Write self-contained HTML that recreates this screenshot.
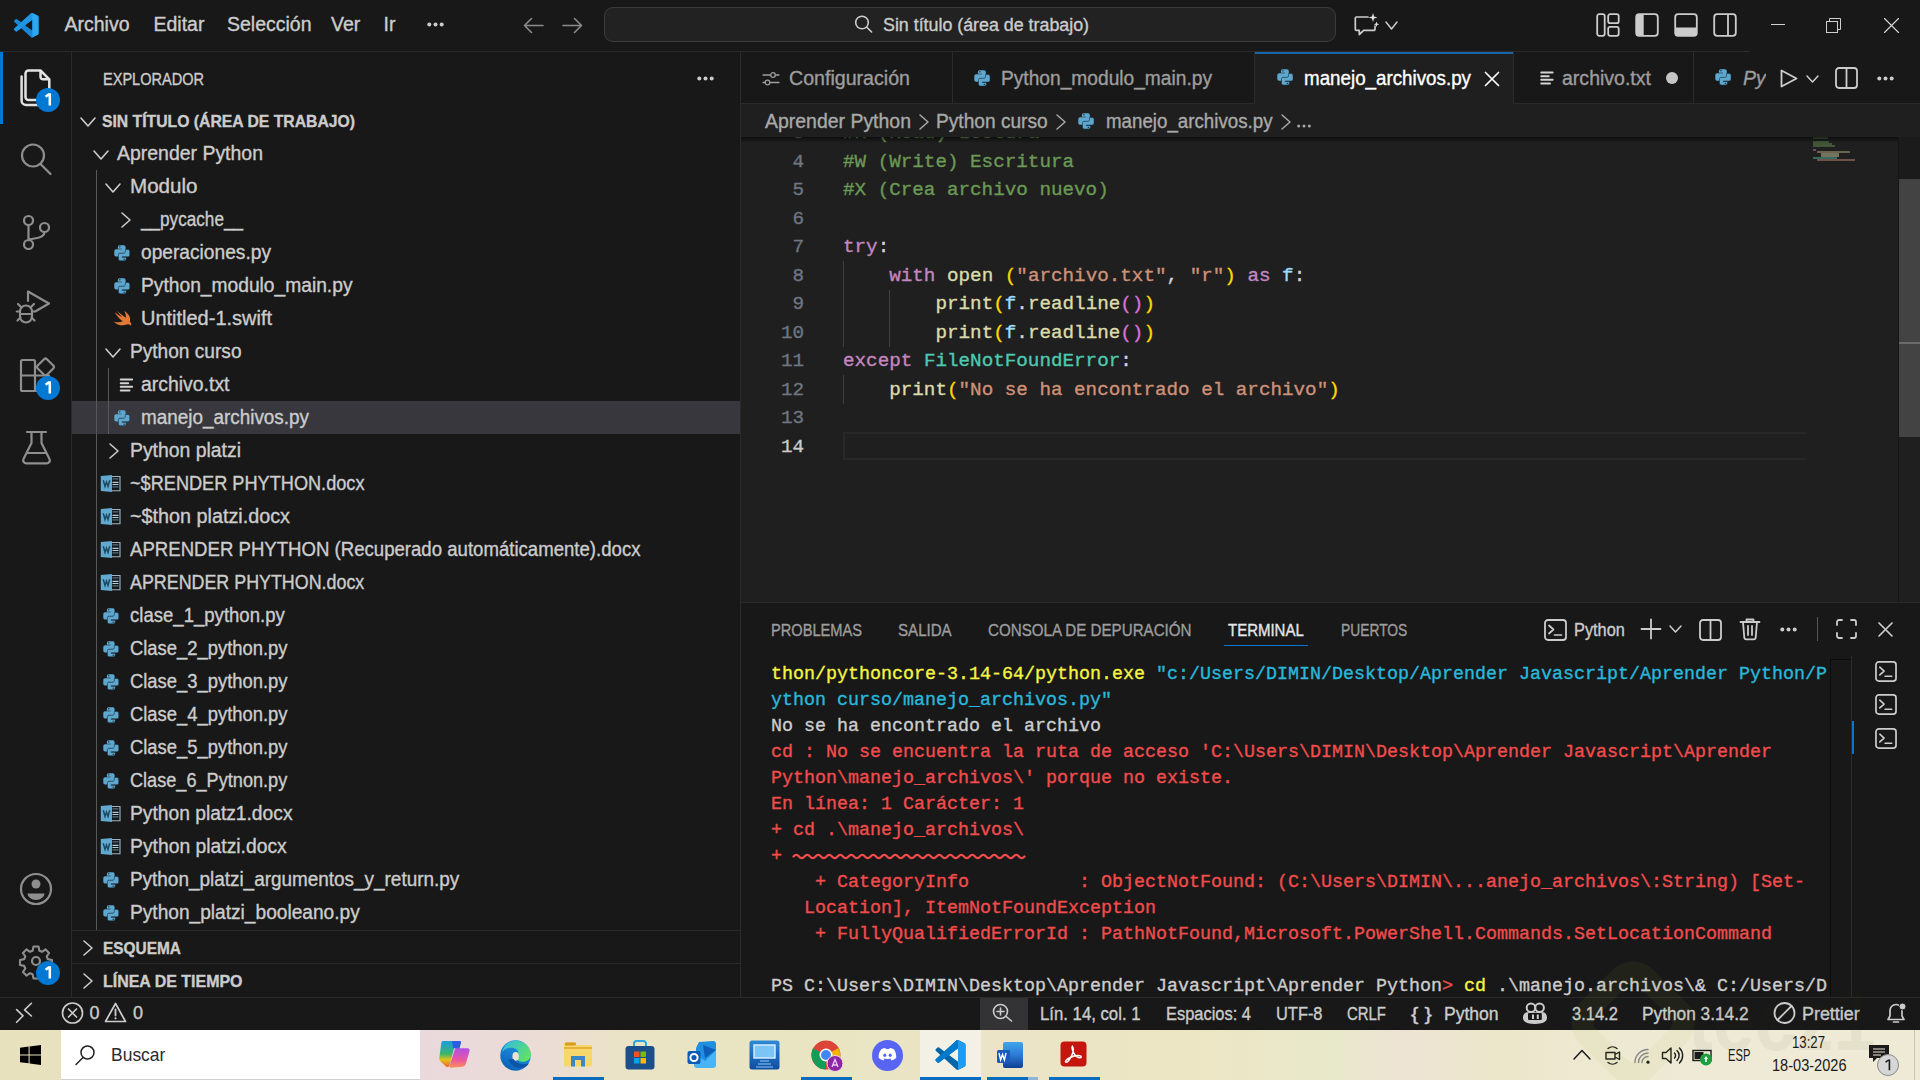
<!DOCTYPE html>
<html><head><meta charset="utf-8"><style>
html,body{margin:0;padding:0;width:1920px;height:1080px;overflow:hidden;background:#181818;}
.t{position:absolute;white-space:pre;font-family:"Liberation Sans",sans-serif;line-height:1;transform-origin:0 0;-webkit-text-stroke-width:0.35px;}
.r{position:absolute;}
.i{position:absolute;overflow:visible;}
</style></head><body>
<div class="r" style="left:0px;top:0px;width:1920px;height:1080px;background:#181818;"></div>
<div class="r" style="left:0px;top:51px;width:1750px;height:1px;background:#2b2b2b;"></div>
<div class="r" style="left:71px;top:52px;width:1px;height:945px;background:#2b2b2b;"></div>
<div class="r" style="left:740px;top:52px;width:1px;height:945px;background:#2b2b2b;"></div>
<div class="r" style="left:741px;top:103px;width:1179px;height:500px;background:#1f1f1f;"></div>
<div class="r" style="left:741px;top:103px;width:1179px;height:1px;background:#2b2b2b;"></div>
<div class="r" style="left:741px;top:602px;width:1179px;height:1px;background:#2b2b2b;"></div>
<div class="r" style="left:741px;top:603px;width:1179px;height:394px;background:#181818;"></div>
<div class="r" style="left:0px;top:997px;width:1920px;height:1px;background:#2b2b2b;"></div>
<div class="r" style="left:0px;top:998px;width:1920px;height:32px;background:#181818;"></div>
<svg class="i" style="left:14px;top:12.5px;width:24.5px;height:24.5px;" viewBox="0 0 100 100"><path fill="#1a86d6" d="M96.5 10.8L75.9.9a6.2 6.2 0 0 0-7.1 1.2L29.4 38 12.2 25a4.2 4.2 0 0 0-5.3.2L1.4 30.2a4.2 4.2 0 0 0 0 6.2L16.3 50 1.4 63.6a4.2 4.2 0 0 0 0 6.2l5.5 5a4.2 4.2 0 0 0 5.3.2l17.2-13 39.4 35.9a6.2 6.2 0 0 0 7.1 1.2l20.6-9.9a6.2 6.2 0 0 0 3.5-5.6V16.4a6.2 6.2 0 0 0-3.5-5.6zM75 72.7L45.1 50 75 27.3z"></path><path fill="#1f95e4" d="M96.5 10.8L75.9.9a6.2 6.2 0 0 0-7.1 1.2L1.4 63.6a4.2 4.2 0 0 0 0 6.2l5.5 5a4.2 4.2 0 0 0 5.3.2L93.4 13.2a4.2 4.2 0 0 1 6.6 3.2v-.2a6.2 6.2 0 0 0-3.5-5.4z"></path><path fill="#2aa8f2" d="M75.9 99.1a6.2 6.2 0 0 1-7.1-1.2c2.3 2.3 6.2.7 6.2-2.6V4.7c0-3.3-3.9-4.9-6.2-2.6a6.2 6.2 0 0 1 7.1-1.2l20.6 9.9a6.2 6.2 0 0 1 3.5 5.6v67.2a6.2 6.2 0 0 1-3.5 5.6z"></path></svg>
<div class="t" style="left:64.5px;top:15.49px;font-size:19.5px;color:#cccccc;">Archivo</div>
<div class="t" style="left:153.5px;top:15.49px;font-size:19.5px;color:#cccccc;">Editar</div>
<div class="t" style="left:227px;top:15.49px;font-size:19.5px;color:#cccccc;">Selección</div>
<div class="t" style="left:331px;top:15.49px;font-size:19.5px;color:#cccccc;">Ver</div>
<div class="t" style="left:383.5px;top:15.49px;font-size:19.5px;color:#cccccc;">Ir</div>
<svg class="i" style="left:427px;top:22px;width:17px;height:5px;" viewBox="0 0 17 5"><circle cx="2.3" cy="2.5" r="2" fill="#cccccc"></circle><circle cx="8.5" cy="2.5" r="2" fill="#cccccc"></circle><circle cx="14.7" cy="2.5" r="2" fill="#cccccc"></circle></svg>
<svg class="i" style="left:523px;top:17px;width:21px;height:17px;" viewBox="0 0 21 17"><path d="M20 8.5H1.5M8.5 1.5L1.5 8.5l7 7" fill="none" stroke="#8a8a8a" stroke-width="1.6" stroke-linecap="round" stroke-linejoin="round"></path></svg>
<svg class="i" style="left:562px;top:17px;width:21px;height:17px;" viewBox="0 0 21 17"><path d="M1 8.5h18.5M12.5 1.5l7 7-7 7" fill="none" stroke="#8a8a8a" stroke-width="1.6" stroke-linecap="round" stroke-linejoin="round"></path></svg>
<div class="r" style="left:604px;top:7px;width:730px;height:33px;border:1px solid #3c3c3c;border-radius:9px;background:#222222;"></div>
<svg class="i" style="left:854px;top:15px;width:19px;height:18px;" viewBox="0 0 19 18"><path d="M8 1.2a6.3 6.3 0 1 1 0 12.6A6.3 6.3 0 0 1 8 1.2zM12.6 12l5 5" fill="none" stroke="#cccccc" stroke-width="1.6" stroke-linecap="round" stroke-linejoin="round"></path></svg>
<div class="t" style="left: 883px; top: 15.76px; font-size: 18px; color: rgb(204, 204, 204); transform: scaleX(0.9898);">Sin título (área de trabajo)</div>
<svg class="i" style="left:1354px;top:12px;width:26px;height:25px;" viewBox="0 0 26 25"><path d="M14 5H2.5a1.2 1.2 0 0 0-1.2 1.2v11a1.2 1.2 0 0 0 1.2 1.2h2.8v4.2l4.3-4.2h10.2a1.2 1.2 0 0 0 1.2-1.2v-3" fill="none" stroke="#cccccc" stroke-width="1.7" stroke-linecap="round" stroke-linejoin="round"></path><path d="M19 1l1.1 3.4 3.4 1.1-3.4 1.1L19 10l-1.1-3.4-3.4-1.1 3.4-1.1z" fill="#e0e0e0"></path><path d="M22.5 9.5l.7 2 2 .7-2 .7-.7 2-.7-2-2-.7 2-.7z" fill="#e0e0e0"></path></svg>
<svg class="i" style="left:1385px;top:21px;width:13px;height:9px;" viewBox="0 0 13 9"><path d="M1 1L6.5 8L12 1" fill="none" stroke="#cccccc" stroke-width="1.5" stroke-linecap="round" stroke-linejoin="round"></path></svg>
<svg class="i" style="left:1596px;top:13px;width:24px;height:24px;" viewBox="0 0 24 24"><rect x="1.2" y="1.2" width="7.5" height="21.6" rx="2" fill="none" stroke="#cccccc" stroke-width="1.8"></rect><rect x="12.2" y="1.2" width="10.5" height="9" rx="2" fill="none" stroke="#cccccc" stroke-width="1.8"></rect><rect x="12.2" y="13.8" width="10.5" height="9" rx="2" fill="none" stroke="#cccccc" stroke-width="1.8"></rect></svg>
<svg class="i" style="left:1635px;top:13px;width:24px;height:24px;" viewBox="0 0 24 24"><path d="M3.2 1.2h5.5v21.6H3.2a2 2 0 0 1-2-2V3.2a2 2 0 0 1 2-2z" fill="#cccccc"></path><rect x="1.2" y="1.2" width="21.6" height="21.6" rx="3" fill="none" stroke="#cccccc" stroke-width="1.8"></rect></svg>
<svg class="i" style="left:1674px;top:13px;width:24px;height:24px;" viewBox="0 0 24 24"><path d="M1.2 14.5h21.6v5.3a3 3 0 0 1-3 3H4.2a3 3 0 0 1-3-3z" fill="#cccccc"></path><rect x="1.2" y="1.2" width="21.6" height="21.6" rx="3" fill="none" stroke="#cccccc" stroke-width="1.8"></rect></svg>
<svg class="i" style="left:1713px;top:13px;width:24px;height:24px;" viewBox="0 0 24 24"><rect x="1.2" y="1.2" width="21.6" height="21.6" rx="3" fill="none" stroke="#cccccc" stroke-width="1.8"></rect><path d="M15 1.2v21.6" stroke="#cccccc" stroke-width="1.8"></path></svg>
<div class="r" style="left:1771px;top:24px;width:14px;height:1px;background:#d0d0d0;"></div>
<svg class="i" style="left:1826px;top:18px;width:15px;height:15px;" viewBox="0 0 15 15"><rect x="0.5" y="3.5" width="11" height="11" fill="none" stroke="#d0d0d0" stroke-width="1"></rect><path d="M3.5 3.5V.5h11v11h-3" fill="none" stroke="#d0d0d0" stroke-width="1"></path></svg>
<svg class="i" style="left:1884px;top:18px;width:15px;height:15px;" viewBox="0 0 15 15"><path d="M.5.5l14 14M14.5.5l-14 14" fill="none" stroke="#d8d8d8" stroke-width="1.1" stroke-linecap="round" stroke-linejoin="round"></path></svg>
<div class="r" style="left:0px;top:52px;width:3px;height:72px;background:#0078d4;"></div>
<svg class="i" style="left:19px;top:69px;width:32px;height:38px;" viewBox="0 0 32 38"><path d="M9.5 1.5h12l8.8 8.8V28a3 3 0 0 1-3 3H9.5a3 3 0 0 1-3-3V4.5a3 3 0 0 1 3-3zM21.5 1.5v6.3a2.5 2.5 0 0 0 2.5 2.5h6.3" fill="none" stroke="#e2e2e2" stroke-width="2.5" stroke-linecap="round" stroke-linejoin="round"></path><path d="M2.6 7.5v24a4.5 4.5 0 0 0 4.5 4.5h14" fill="none" stroke="#e2e2e2" stroke-width="2.5" stroke-linecap="round" stroke-linejoin="round"></path></svg>
<div class="r" style="left:36px;top:88px;width:24px;height:24px;border-radius:12px;background:#0078d4;"></div>
<svg class="i" style="left:36px;top:88px;width:24px;height:24px;" viewBox="0 0 24 24"><path d="M9.6 8.8L12.6 6.5H13.8V17.6" fill="none" stroke="#ffffff" stroke-width="2.5" stroke-linejoin="miter"></path></svg>
<svg class="i" style="left:19px;top:142px;width:34px;height:34px;" viewBox="0 0 34 34"><path d="M14 2.5a11 11 0 1 1 0 22 11 11 0 0 1 0-22zM22 22.5l9.5 9.5" fill="none" stroke="#8e8e8e" stroke-width="2.2" stroke-linecap="round" stroke-linejoin="round"></path></svg>
<svg class="i" style="left:19.5px;top:213px;width:32px;height:38px;" viewBox="0 0 32 38"><path d="M8.5 3a4.5 4.5 0 1 1 0 9 4.5 4.5 0 0 1 0-9zM8.5 27a4.5 4.5 0 1 1 0 9 4.5 4.5 0 0 1 0-9zM24.5 10a4.5 4.5 0 1 1 0 9 4.5 4.5 0 0 1 0-9zM8.5 12v15M24.5 19c0 5-6 6-10 6.5-3 .4-6 1.5-6 1.5" fill="none" stroke="#8e8e8e" stroke-width="2.2" stroke-linecap="round" stroke-linejoin="round"></path></svg>
<svg class="i" style="left:16px;top:288px;width:36px;height:36px;" viewBox="0 0 36 36"><path d="M12 13V3.5l21 12-13 7.5" fill="none" stroke="#8e8e8e" stroke-width="2.2" stroke-linecap="round" stroke-linejoin="round"></path><path d="M10 17.5a6 6 0 0 1 6 6v5a6 6 0 0 1-12 0v-5a6 6 0 0 1 6-6zM4 23.5H.8M19.2 23.5H16M4.5 29.5l-3 3M15.5 29.5l3 3M4.5 18.5l-2.5-2.5M15.5 18.5l2.5-2.5M4 26h12" fill="none" stroke="#8e8e8e" stroke-width="2.2" stroke-linecap="round" stroke-linejoin="round"></path></svg>
<svg class="i" style="left:19px;top:356px;width:37px;height:37px;" viewBox="0 0 37 37"><path d="M3.5 4h11a1.5 1.5 0 0 1 1.5 1.5V19.5H2V5.5A1.5 1.5 0 0 1 3.5 4zM2 19.5h14V35H3.5A1.5 1.5 0 0 1 2 33.5zM16 19.5h14V35H16z" fill="none" stroke="#8e8e8e" stroke-width="2.2" stroke-linejoin="round"></path><rect x="20" y="4.5" width="13" height="13" rx="2" transform="rotate(45 26.5 11)" fill="none" stroke="#8e8e8e" stroke-width="2.2"></rect></svg>
<div class="r" style="left:36px;top:376px;width:24px;height:24px;border-radius:12px;background:#0078d4;"></div>
<svg class="i" style="left:36px;top:376px;width:24px;height:24px;" viewBox="0 0 24 24"><path d="M9.6 8.8L12.6 6.5H13.8V17.6" fill="none" stroke="#ffffff" stroke-width="2.5" stroke-linejoin="miter"></path></svg>
<svg class="i" style="left:21px;top:430px;width:31px;height:35px;" viewBox="0 0 31 35"><path d="M6 2h19M10.5 2v11L2.5 29a3 3 0 0 0 2.7 4.3h20.6A3 3 0 0 0 28.5 29L20.5 13V2M6.5 23h18" fill="none" stroke="#8e8e8e" stroke-width="2.2" stroke-linecap="round" stroke-linejoin="round"></path></svg>
<svg class="i" style="left:19px;top:872px;width:34px;height:34px;" viewBox="0 0 34 34"><circle cx="17" cy="17" r="15" fill="none" stroke="#8e8e8e" stroke-width="2.2"></circle><circle cx="17" cy="12" r="4.5" fill="#8e8e8e"></circle><path d="M8.5 21.5h17a8.5 6.5 0 0 1-17 0z" fill="#8e8e8e"></path></svg>
<svg class="i" style="left:19px;top:944px;width:34px;height:34px;" viewBox="0 0 34 34"><path d="M14.5 2.5h5l.9 4.2 2.6 1.1 3.6-2.4 3.5 3.5-2.4 3.6 1.1 2.6 4.2.9v5l-4.2.9-1.1 2.6 2.4 3.6-3.5 3.5-3.6-2.4-2.6 1.1-.9 4.2h-5l-.9-4.2-2.6-1.1-3.6 2.4-3.5-3.5 2.4-3.6-1.1-2.6-4.2-.9v-5l4.2-.9 1.1-2.6-2.4-3.6 3.5-3.5 3.6 2.4 2.6-1.1z" fill="none" stroke="#8e8e8e" stroke-width="2.1" stroke-linecap="round" stroke-linejoin="round"></path><circle cx="17" cy="17" r="4" fill="none" stroke="#8e8e8e" stroke-width="2.2"></circle></svg>
<div class="r" style="left:36px;top:961px;width:24px;height:24px;border-radius:12px;background:#0078d4;"></div>
<svg class="i" style="left:36px;top:961px;width:24px;height:24px;" viewBox="0 0 24 24"><path d="M9.6 8.8L12.6 6.5H13.8V17.6" fill="none" stroke="#ffffff" stroke-width="2.5" stroke-linejoin="miter"></path></svg>
<div class="t" style="left: 102.5px; top: 71.03px; font-size: 16.5px; color: rgb(204, 204, 204); transform: scaleX(0.8811);">EXPLORADOR</div>
<svg class="i" style="left:697px;top:75.5px;width:17px;height:5px;" viewBox="0 0 17 5"><circle cx="2.3" cy="2.5" r="2" fill="#cccccc"></circle><circle cx="8.5" cy="2.5" r="2" fill="#cccccc"></circle><circle cx="14.7" cy="2.5" r="2" fill="#cccccc"></circle></svg>
<svg class="i" style="left:79.5px;top:116.5px;width:16px;height:10px;" viewBox="0 0 16 10"><path d="M1 1L8.0 9L15 1" fill="none" stroke="#cccccc" stroke-width="1.6" stroke-linecap="round" stroke-linejoin="round"></path></svg>
<div class="t" style="left: 102px; top: 113.03px; font-size: 16.5px; color: rgb(204, 204, 204); font-weight: 700; transform: scaleX(0.9539);">SIN TÍTULO (ÁREA DE TRABAJO)</div>
<div class="r" style="left:72px;top:401px;width:668px;height:33px;background:#37373d;"></div>
<div class="r" style="left:96px;top:170px;width:1px;height:760px;background:#585858;"></div>
<div class="r" style="left:108px;top:368px;width:1px;height:66px;background:#585858;"></div>
<svg class="i" style="left:92.5px;top:149.5px;width:16px;height:10px;" viewBox="0 0 16 10"><path d="M1 1L8.0 9L15 1" fill="none" stroke="#cccccc" stroke-width="1.6" stroke-linecap="round" stroke-linejoin="round"></path></svg>
<div class="t" style="left: 117px; top: 144.49px; font-size: 19.5px; color: rgb(204, 204, 204); transform: scaleX(0.9975);">Aprender Python</div>
<svg class="i" style="left:105px;top:182.5px;width:16px;height:10px;" viewBox="0 0 16 10"><path d="M1 1L8.0 9L15 1" fill="none" stroke="#cccccc" stroke-width="1.6" stroke-linecap="round" stroke-linejoin="round"></path></svg>
<div class="t" style="left: 129.5px; top: 177.49px; font-size: 19.5px; color: rgb(204, 204, 204); transform: scaleX(1.0552);">Modulo</div>
<svg class="i" style="left:121px;top:211.5px;width:10px;height:16px;" viewBox="0 0 10 16"><path d="M1 1L9 8.0L1 15" fill="none" stroke="#cccccc" stroke-width="1.6" stroke-linecap="round" stroke-linejoin="round"></path></svg>
<div class="t" style="left: 141px; top: 210.49px; font-size: 19.5px; color: rgb(204, 204, 204); transform: scaleX(0.8792);">__pycache__</div>
<svg class="i" style="left:114.4px;top:244.5px;width:16px;height:16px;" viewBox="0 0 16.3 16.3"><path fill="#5ea8cf" d="M3.9 2Q3.9 .3 5.6 .3H10Q11.8 .3 11.8 2V6.8Q11.8 8.2 10.3 8.2H6.3Q4.8 8.2 4.8 9.7V11.7H2Q.3 11.7 .3 10V6Q.3 4.3 2 4.3H8V3.7H3.9Z"></path><circle cx="5.9" cy="1.8" r=".75" fill="#1e3a4c"></circle><path fill="#5ea8cf" stroke="#1d3140" stroke-width=".55" d="M12.4 14.3Q12.4 16 10.7 16H6.3Q4.5 16 4.5 14.3V9.8Q4.5 8.3 6 8.3H10Q11.5 8.3 11.5 6.8V4.6H14.3Q16 4.6 16 6.3V10.3Q16 12 14.3 12H8.3V12.6H12.4Z"></path><circle cx="10.4" cy="14.5" r=".75" fill="#1e3a4c"></circle></svg>
<div class="t" style="left: 141px; top: 243.49px; font-size: 19.5px; color: rgb(204, 204, 204); transform: scaleX(0.9829);">operaciones.py</div>
<svg class="i" style="left:114.4px;top:277.5px;width:16px;height:16px;" viewBox="0 0 16.3 16.3"><path fill="#5ea8cf" d="M3.9 2Q3.9 .3 5.6 .3H10Q11.8 .3 11.8 2V6.8Q11.8 8.2 10.3 8.2H6.3Q4.8 8.2 4.8 9.7V11.7H2Q.3 11.7 .3 10V6Q.3 4.3 2 4.3H8V3.7H3.9Z"></path><circle cx="5.9" cy="1.8" r=".75" fill="#1e3a4c"></circle><path fill="#5ea8cf" stroke="#1d3140" stroke-width=".55" d="M12.4 14.3Q12.4 16 10.7 16H6.3Q4.5 16 4.5 14.3V9.8Q4.5 8.3 6 8.3H10Q11.5 8.3 11.5 6.8V4.6H14.3Q16 4.6 16 6.3V10.3Q16 12 14.3 12H8.3V12.6H12.4Z"></path><circle cx="10.4" cy="14.5" r=".75" fill="#1e3a4c"></circle></svg>
<div class="t" style="left: 141px; top: 276.49px; font-size: 19.5px; color: rgb(204, 204, 204); transform: scaleX(0.9854);">Python_modulo_main.py</div>
<svg class="i" style="left:111.5px;top:308.5px;width:21px;height:19px;preserveAspectRatio:none" viewBox="0 0 16 15"><path d="M13.8 9.6c.1-.3.2-.6.2-1C14.3 5.6 12 3 9.3 1.5c1.2 1.7 1.7 3.7 1.2 5.4C8.7 5.6 5.8 3.4 3.5 1.4c1.4 2 3 3.8 4.3 5C6 5.5 3.6 3.8 1.8 2.5c1.6 2.7 3.9 5.4 6.4 7.2-2 1-4.8 1.1-7.2.1 2 2 4.9 3.2 7.5 3.1 1.6 0 2.8-.8 3.9-.8 1 0 1.8.7 2.4 1.2.4-1.3-.2-2.8-1-3.7z" fill="#e37933"></path></svg>
<div class="t" style="left: 141px; top: 309.49px; font-size: 19.5px; color: rgb(204, 204, 204); transform: scaleX(1.0244);">Untitled-1.swift</div>
<svg class="i" style="left:105px;top:347.5px;width:16px;height:10px;" viewBox="0 0 16 10"><path d="M1 1L8.0 9L15 1" fill="none" stroke="#cccccc" stroke-width="1.6" stroke-linecap="round" stroke-linejoin="round"></path></svg>
<div class="t" style="left: 129.5px; top: 342.49px; font-size: 19.5px; color: rgb(204, 204, 204); transform: scaleX(0.9797);">Python curso</div>
<svg class="i" style="left:118.5px;top:378px;width:14px;height:14px;preserveAspectRatio:none" viewBox="0 0 14 16"><path d="M1 1.8h13M1 6h8.5M1 10h13M1 14.2h10" fill="none" stroke="#d4d4d4" stroke-width="2.3" stroke-linecap="round" stroke-linejoin="round"></path></svg>
<div class="t" style="left: 141px; top: 375.49px; font-size: 19.5px; color: rgb(204, 204, 204); transform: scaleX(0.9958);">archivo.txt</div>
<svg class="i" style="left:114.4px;top:409.5px;width:16px;height:16px;" viewBox="0 0 16.3 16.3"><path fill="#5ea8cf" d="M3.9 2Q3.9 .3 5.6 .3H10Q11.8 .3 11.8 2V6.8Q11.8 8.2 10.3 8.2H6.3Q4.8 8.2 4.8 9.7V11.7H2Q.3 11.7 .3 10V6Q.3 4.3 2 4.3H8V3.7H3.9Z"></path><circle cx="5.9" cy="1.8" r=".75" fill="#1e3a4c"></circle><path fill="#5ea8cf" stroke="#1d3140" stroke-width=".55" d="M12.4 14.3Q12.4 16 10.7 16H6.3Q4.5 16 4.5 14.3V9.8Q4.5 8.3 6 8.3H10Q11.5 8.3 11.5 6.8V4.6H14.3Q16 4.6 16 6.3V10.3Q16 12 14.3 12H8.3V12.6H12.4Z"></path><circle cx="10.4" cy="14.5" r=".75" fill="#1e3a4c"></circle></svg>
<div class="t" style="left: 141px; top: 408.49px; font-size: 19.5px; color: rgb(204, 204, 204); transform: scaleX(0.9686);">manejo_archivos.py</div>
<svg class="i" style="left:108.5px;top:442.5px;width:10px;height:16px;" viewBox="0 0 10 16"><path d="M1 1L9 8.0L1 15" fill="none" stroke="#cccccc" stroke-width="1.6" stroke-linecap="round" stroke-linejoin="round"></path></svg>
<div class="t" style="left: 129.5px; top: 441.49px; font-size: 19.5px; color: rgb(204, 204, 204); transform: scaleX(0.9941);">Python platzi</div>
<svg class="i" style="left:96px;top:470px;width:30px;height:26px;" viewBox="0 0 30 26"><path d="M16 6.5h8v14.2h-8" fill="none" stroke="#9ab5c5" stroke-width="1.1"></path><path d="M16.5 12.4h6M16.5 14.5h6" stroke="#b0cfe0" stroke-width="1.2"></path><path d="M16.5 8.9h6M16.5 16.9h6" stroke="#5f8ba3" stroke-width="1"></path><path d="M4.8 6L16 5v17L4.8 21z" fill="#62a9d0"></path><path d="M7.3 10.3l1.7 6.2 1.5-4.4 1.5 4.4 1.7-6.2" fill="none" stroke="#1d4963" stroke-width="1.5"></path></svg>
<div class="t" style="left: 130px; top: 474.49px; font-size: 19.5px; color: rgb(204, 204, 204); transform: scaleX(0.9307);">~$RENDER PHYTHON.docx</div>
<svg class="i" style="left:96px;top:503px;width:30px;height:26px;" viewBox="0 0 30 26"><path d="M16 6.5h8v14.2h-8" fill="none" stroke="#9ab5c5" stroke-width="1.1"></path><path d="M16.5 12.4h6M16.5 14.5h6" stroke="#b0cfe0" stroke-width="1.2"></path><path d="M16.5 8.9h6M16.5 16.9h6" stroke="#5f8ba3" stroke-width="1"></path><path d="M4.8 6L16 5v17L4.8 21z" fill="#62a9d0"></path><path d="M7.3 10.3l1.7 6.2 1.5-4.4 1.5 4.4 1.7-6.2" fill="none" stroke="#1d4963" stroke-width="1.5"></path></svg>
<div class="t" style="left: 130px; top: 507.49px; font-size: 19.5px; color: rgb(204, 204, 204); transform: scaleX(1.0144);">~$thon platzi.docx</div>
<svg class="i" style="left:96px;top:536px;width:30px;height:26px;" viewBox="0 0 30 26"><path d="M16 6.5h8v14.2h-8" fill="none" stroke="#9ab5c5" stroke-width="1.1"></path><path d="M16.5 12.4h6M16.5 14.5h6" stroke="#b0cfe0" stroke-width="1.2"></path><path d="M16.5 8.9h6M16.5 16.9h6" stroke="#5f8ba3" stroke-width="1"></path><path d="M4.8 6L16 5v17L4.8 21z" fill="#62a9d0"></path><path d="M7.3 10.3l1.7 6.2 1.5-4.4 1.5 4.4 1.7-6.2" fill="none" stroke="#1d4963" stroke-width="1.5"></path></svg>
<div class="t" style="left: 129.5px; top: 540.49px; font-size: 19.5px; color: rgb(204, 204, 204); transform: scaleX(0.9535);">APRENDER PHYTHON (Recuperado automáticamente).docx</div>
<svg class="i" style="left:96px;top:569px;width:30px;height:26px;" viewBox="0 0 30 26"><path d="M16 6.5h8v14.2h-8" fill="none" stroke="#9ab5c5" stroke-width="1.1"></path><path d="M16.5 12.4h6M16.5 14.5h6" stroke="#b0cfe0" stroke-width="1.2"></path><path d="M16.5 8.9h6M16.5 16.9h6" stroke="#5f8ba3" stroke-width="1"></path><path d="M4.8 6L16 5v17L4.8 21z" fill="#62a9d0"></path><path d="M7.3 10.3l1.7 6.2 1.5-4.4 1.5 4.4 1.7-6.2" fill="none" stroke="#1d4963" stroke-width="1.5"></path></svg>
<div class="t" style="left: 129.5px; top: 573.49px; font-size: 19.5px; color: rgb(204, 204, 204); transform: scaleX(0.916);">APRENDER PHYTHON.docx</div>
<svg class="i" style="left:102.6px;top:607.5px;width:16px;height:16px;" viewBox="0 0 16.3 16.3"><path fill="#5ea8cf" d="M3.9 2Q3.9 .3 5.6 .3H10Q11.8 .3 11.8 2V6.8Q11.8 8.2 10.3 8.2H6.3Q4.8 8.2 4.8 9.7V11.7H2Q.3 11.7 .3 10V6Q.3 4.3 2 4.3H8V3.7H3.9Z"></path><circle cx="5.9" cy="1.8" r=".75" fill="#1e3a4c"></circle><path fill="#5ea8cf" stroke="#1d3140" stroke-width=".55" d="M12.4 14.3Q12.4 16 10.7 16H6.3Q4.5 16 4.5 14.3V9.8Q4.5 8.3 6 8.3H10Q11.5 8.3 11.5 6.8V4.6H14.3Q16 4.6 16 6.3V10.3Q16 12 14.3 12H8.3V12.6H12.4Z"></path><circle cx="10.4" cy="14.5" r=".75" fill="#1e3a4c"></circle></svg>
<div class="t" style="left: 129.5px; top: 606.49px; font-size: 19.5px; color: rgb(204, 204, 204); transform: scaleX(0.9516);">clase_1_python.py</div>
<svg class="i" style="left:102.6px;top:640.5px;width:16px;height:16px;" viewBox="0 0 16.3 16.3"><path fill="#5ea8cf" d="M3.9 2Q3.9 .3 5.6 .3H10Q11.8 .3 11.8 2V6.8Q11.8 8.2 10.3 8.2H6.3Q4.8 8.2 4.8 9.7V11.7H2Q.3 11.7 .3 10V6Q.3 4.3 2 4.3H8V3.7H3.9Z"></path><circle cx="5.9" cy="1.8" r=".75" fill="#1e3a4c"></circle><path fill="#5ea8cf" stroke="#1d3140" stroke-width=".55" d="M12.4 14.3Q12.4 16 10.7 16H6.3Q4.5 16 4.5 14.3V9.8Q4.5 8.3 6 8.3H10Q11.5 8.3 11.5 6.8V4.6H14.3Q16 4.6 16 6.3V10.3Q16 12 14.3 12H8.3V12.6H12.4Z"></path><circle cx="10.4" cy="14.5" r=".75" fill="#1e3a4c"></circle></svg>
<div class="t" style="left: 129.5px; top: 639.49px; font-size: 19.5px; color: rgb(204, 204, 204); transform: scaleX(0.9434);">Clase_2_python.py</div>
<svg class="i" style="left:102.6px;top:673.5px;width:16px;height:16px;" viewBox="0 0 16.3 16.3"><path fill="#5ea8cf" d="M3.9 2Q3.9 .3 5.6 .3H10Q11.8 .3 11.8 2V6.8Q11.8 8.2 10.3 8.2H6.3Q4.8 8.2 4.8 9.7V11.7H2Q.3 11.7 .3 10V6Q.3 4.3 2 4.3H8V3.7H3.9Z"></path><circle cx="5.9" cy="1.8" r=".75" fill="#1e3a4c"></circle><path fill="#5ea8cf" stroke="#1d3140" stroke-width=".55" d="M12.4 14.3Q12.4 16 10.7 16H6.3Q4.5 16 4.5 14.3V9.8Q4.5 8.3 6 8.3H10Q11.5 8.3 11.5 6.8V4.6H14.3Q16 4.6 16 6.3V10.3Q16 12 14.3 12H8.3V12.6H12.4Z"></path><circle cx="10.4" cy="14.5" r=".75" fill="#1e3a4c"></circle></svg>
<div class="t" style="left: 129.5px; top: 672.49px; font-size: 19.5px; color: rgb(204, 204, 204); transform: scaleX(0.9434);">Clase_3_python.py</div>
<svg class="i" style="left:102.6px;top:706.5px;width:16px;height:16px;" viewBox="0 0 16.3 16.3"><path fill="#5ea8cf" d="M3.9 2Q3.9 .3 5.6 .3H10Q11.8 .3 11.8 2V6.8Q11.8 8.2 10.3 8.2H6.3Q4.8 8.2 4.8 9.7V11.7H2Q.3 11.7 .3 10V6Q.3 4.3 2 4.3H8V3.7H3.9Z"></path><circle cx="5.9" cy="1.8" r=".75" fill="#1e3a4c"></circle><path fill="#5ea8cf" stroke="#1d3140" stroke-width=".55" d="M12.4 14.3Q12.4 16 10.7 16H6.3Q4.5 16 4.5 14.3V9.8Q4.5 8.3 6 8.3H10Q11.5 8.3 11.5 6.8V4.6H14.3Q16 4.6 16 6.3V10.3Q16 12 14.3 12H8.3V12.6H12.4Z"></path><circle cx="10.4" cy="14.5" r=".75" fill="#1e3a4c"></circle></svg>
<div class="t" style="left: 129.5px; top: 705.49px; font-size: 19.5px; color: rgb(204, 204, 204); transform: scaleX(0.9434);">Clase_4_python.py</div>
<svg class="i" style="left:102.6px;top:739.5px;width:16px;height:16px;" viewBox="0 0 16.3 16.3"><path fill="#5ea8cf" d="M3.9 2Q3.9 .3 5.6 .3H10Q11.8 .3 11.8 2V6.8Q11.8 8.2 10.3 8.2H6.3Q4.8 8.2 4.8 9.7V11.7H2Q.3 11.7 .3 10V6Q.3 4.3 2 4.3H8V3.7H3.9Z"></path><circle cx="5.9" cy="1.8" r=".75" fill="#1e3a4c"></circle><path fill="#5ea8cf" stroke="#1d3140" stroke-width=".55" d="M12.4 14.3Q12.4 16 10.7 16H6.3Q4.5 16 4.5 14.3V9.8Q4.5 8.3 6 8.3H10Q11.5 8.3 11.5 6.8V4.6H14.3Q16 4.6 16 6.3V10.3Q16 12 14.3 12H8.3V12.6H12.4Z"></path><circle cx="10.4" cy="14.5" r=".75" fill="#1e3a4c"></circle></svg>
<div class="t" style="left: 129.5px; top: 738.49px; font-size: 19.5px; color: rgb(204, 204, 204); transform: scaleX(0.9434);">Clase_5_python.py</div>
<svg class="i" style="left:102.6px;top:772.5px;width:16px;height:16px;" viewBox="0 0 16.3 16.3"><path fill="#5ea8cf" d="M3.9 2Q3.9 .3 5.6 .3H10Q11.8 .3 11.8 2V6.8Q11.8 8.2 10.3 8.2H6.3Q4.8 8.2 4.8 9.7V11.7H2Q.3 11.7 .3 10V6Q.3 4.3 2 4.3H8V3.7H3.9Z"></path><circle cx="5.9" cy="1.8" r=".75" fill="#1e3a4c"></circle><path fill="#5ea8cf" stroke="#1d3140" stroke-width=".55" d="M12.4 14.3Q12.4 16 10.7 16H6.3Q4.5 16 4.5 14.3V9.8Q4.5 8.3 6 8.3H10Q11.5 8.3 11.5 6.8V4.6H14.3Q16 4.6 16 6.3V10.3Q16 12 14.3 12H8.3V12.6H12.4Z"></path><circle cx="10.4" cy="14.5" r=".75" fill="#1e3a4c"></circle></svg>
<div class="t" style="left: 129.5px; top: 771.49px; font-size: 19.5px; color: rgb(204, 204, 204); transform: scaleX(0.9298);">Clase_6_Pytnon.py</div>
<svg class="i" style="left:96px;top:800px;width:30px;height:26px;" viewBox="0 0 30 26"><path d="M16 6.5h8v14.2h-8" fill="none" stroke="#9ab5c5" stroke-width="1.1"></path><path d="M16.5 12.4h6M16.5 14.5h6" stroke="#b0cfe0" stroke-width="1.2"></path><path d="M16.5 8.9h6M16.5 16.9h6" stroke="#5f8ba3" stroke-width="1"></path><path d="M4.8 6L16 5v17L4.8 21z" fill="#62a9d0"></path><path d="M7.3 10.3l1.7 6.2 1.5-4.4 1.5 4.4 1.7-6.2" fill="none" stroke="#1d4963" stroke-width="1.5"></path></svg>
<div class="t" style="left: 129.5px; top: 804.49px; font-size: 19.5px; color: rgb(204, 204, 204); transform: scaleX(0.9862);">Python platz1.docx</div>
<svg class="i" style="left:96px;top:833px;width:30px;height:26px;" viewBox="0 0 30 26"><path d="M16 6.5h8v14.2h-8" fill="none" stroke="#9ab5c5" stroke-width="1.1"></path><path d="M16.5 12.4h6M16.5 14.5h6" stroke="#b0cfe0" stroke-width="1.2"></path><path d="M16.5 8.9h6M16.5 16.9h6" stroke="#5f8ba3" stroke-width="1"></path><path d="M4.8 6L16 5v17L4.8 21z" fill="#62a9d0"></path><path d="M7.3 10.3l1.7 6.2 1.5-4.4 1.5 4.4 1.7-6.2" fill="none" stroke="#1d4963" stroke-width="1.5"></path></svg>
<div class="t" style="left: 129.5px; top: 837.49px; font-size: 19.5px; color: rgb(204, 204, 204); transform: scaleX(0.9904);">Python platzi.docx</div>
<svg class="i" style="left:102.6px;top:871.5px;width:16px;height:16px;" viewBox="0 0 16.3 16.3"><path fill="#5ea8cf" d="M3.9 2Q3.9 .3 5.6 .3H10Q11.8 .3 11.8 2V6.8Q11.8 8.2 10.3 8.2H6.3Q4.8 8.2 4.8 9.7V11.7H2Q.3 11.7 .3 10V6Q.3 4.3 2 4.3H8V3.7H3.9Z"></path><circle cx="5.9" cy="1.8" r=".75" fill="#1e3a4c"></circle><path fill="#5ea8cf" stroke="#1d3140" stroke-width=".55" d="M12.4 14.3Q12.4 16 10.7 16H6.3Q4.5 16 4.5 14.3V9.8Q4.5 8.3 6 8.3H10Q11.5 8.3 11.5 6.8V4.6H14.3Q16 4.6 16 6.3V10.3Q16 12 14.3 12H8.3V12.6H12.4Z"></path><circle cx="10.4" cy="14.5" r=".75" fill="#1e3a4c"></circle></svg>
<div class="t" style="left: 129.5px; top: 870.49px; font-size: 19.5px; color: rgb(204, 204, 204); transform: scaleX(0.9704);">Python_platzi_argumentos_y_return.py</div>
<svg class="i" style="left:102.6px;top:904.5px;width:16px;height:16px;" viewBox="0 0 16.3 16.3"><path fill="#5ea8cf" d="M3.9 2Q3.9 .3 5.6 .3H10Q11.8 .3 11.8 2V6.8Q11.8 8.2 10.3 8.2H6.3Q4.8 8.2 4.8 9.7V11.7H2Q.3 11.7 .3 10V6Q.3 4.3 2 4.3H8V3.7H3.9Z"></path><circle cx="5.9" cy="1.8" r=".75" fill="#1e3a4c"></circle><path fill="#5ea8cf" stroke="#1d3140" stroke-width=".55" d="M12.4 14.3Q12.4 16 10.7 16H6.3Q4.5 16 4.5 14.3V9.8Q4.5 8.3 6 8.3H10Q11.5 8.3 11.5 6.8V4.6H14.3Q16 4.6 16 6.3V10.3Q16 12 14.3 12H8.3V12.6H12.4Z"></path><circle cx="10.4" cy="14.5" r=".75" fill="#1e3a4c"></circle></svg>
<div class="t" style="left: 129.5px; top: 903.49px; font-size: 19.5px; color: rgb(204, 204, 204); transform: scaleX(0.9811);">Python_platzi_booleano.py</div>
<div class="r" style="left:72px;top:930px;width:668px;height:1px;background:#2b2b2b;"></div>
<svg class="i" style="left:82.5px;top:940px;width:10px;height:16px;" viewBox="0 0 10 16"><path d="M1 1L9 8.0L1 15" fill="none" stroke="#cccccc" stroke-width="1.6" stroke-linecap="round" stroke-linejoin="round"></path></svg>
<div class="t" style="left: 102.5px; top: 940.03px; font-size: 16.5px; color: rgb(204, 204, 204); font-weight: 700; transform: scaleX(0.9348);">ESQUEMA</div>
<div class="r" style="left:72px;top:963px;width:668px;height:1px;background:#2b2b2b;"></div>
<svg class="i" style="left:82.5px;top:973px;width:10px;height:16px;" viewBox="0 0 10 16"><path d="M1 1L9 8.0L1 15" fill="none" stroke="#cccccc" stroke-width="1.6" stroke-linecap="round" stroke-linejoin="round"></path></svg>
<div class="t" style="left: 102.5px; top: 973.03px; font-size: 16.5px; color: rgb(204, 204, 204); font-weight: 700; transform: scaleX(0.9672);">LÍNEA DE TIEMPO</div>
<div class="r" style="left:843px;top:261px;width:1px;height:85.5px;background:#404040;"></div>
<div class="r" style="left:889px;top:289.5px;width:1px;height:57px;background:#404040;"></div>
<div class="r" style="left:843px;top:375px;width:1px;height:28.5px;background:#404040;"></div>
<div class="r" style="left:843px;top:432px;width:962px;height:24px;border:2px solid #282828;border-right:0;"></div>
<div class="t" style="left:792.45px;top:124.24px;font-size:19.25px;font-family:'Liberation Mono',monospace;color:#6e7681">3</div>
<div class="t" style="left:843px;top:124.24px;font-size:19.25px;font-family:'Liberation Mono',monospace;"><span style="color:#6a9955">#R (Read) Lectura</span></div>
<div class="t" style="left:792.45px;top:152.74px;font-size:19.25px;font-family:'Liberation Mono',monospace;color:#6e7681">4</div>
<div class="t" style="left:843px;top:152.74px;font-size:19.25px;font-family:'Liberation Mono',monospace;"><span style="color:#6a9955">#W (Write) Escritura</span></div>
<div class="t" style="left:792.45px;top:181.24px;font-size:19.25px;font-family:'Liberation Mono',monospace;color:#6e7681">5</div>
<div class="t" style="left:843px;top:181.24px;font-size:19.25px;font-family:'Liberation Mono',monospace;"><span style="color:#6a9955">#X (Crea archivo nuevo)</span></div>
<div class="t" style="left:792.45px;top:209.74px;font-size:19.25px;font-family:'Liberation Mono',monospace;color:#6e7681">6</div>
<div class="t" style="left:792.45px;top:238.24px;font-size:19.25px;font-family:'Liberation Mono',monospace;color:#6e7681">7</div>
<div class="t" style="left:843px;top:238.24px;font-size:19.25px;font-family:'Liberation Mono',monospace;"><span style="color:#c586c0">try</span><span style="color:#d4d4d4">:</span></div>
<div class="t" style="left:792.45px;top:266.74px;font-size:19.25px;font-family:'Liberation Mono',monospace;color:#6e7681">8</div>
<div class="t" style="left:843px;top:266.74px;font-size:19.25px;font-family:'Liberation Mono',monospace;"><span style="color:#d4d4d4">    </span><span style="color:#c586c0">with</span><span style="color:#d4d4d4"> </span><span style="color:#dcdcaa">open</span><span style="color:#d4d4d4"> </span><span style="color:#ffd700">(</span><span style="color:#ce9178">"archivo.txt"</span><span style="color:#d4d4d4">, </span><span style="color:#ce9178">"r"</span><span style="color:#ffd700">)</span><span style="color:#d4d4d4"> </span><span style="color:#c586c0">as</span><span style="color:#d4d4d4"> </span><span style="color:#9cdcfe">f</span><span style="color:#d4d4d4">:</span></div>
<div class="t" style="left:792.45px;top:295.24px;font-size:19.25px;font-family:'Liberation Mono',monospace;color:#6e7681">9</div>
<div class="t" style="left:843px;top:295.24px;font-size:19.25px;font-family:'Liberation Mono',monospace;"><span style="color:#d4d4d4">        </span><span style="color:#dcdcaa">print</span><span style="color:#ffd700">(</span><span style="color:#9cdcfe">f</span><span style="color:#d4d4d4">.</span><span style="color:#dcdcaa">readline</span><span style="color:#da70d6">()</span><span style="color:#ffd700">)</span></div>
<div class="t" style="left:780.90px;top:323.74px;font-size:19.25px;font-family:'Liberation Mono',monospace;color:#6e7681">10</div>
<div class="t" style="left:843px;top:323.74px;font-size:19.25px;font-family:'Liberation Mono',monospace;"><span style="color:#d4d4d4">        </span><span style="color:#dcdcaa">print</span><span style="color:#ffd700">(</span><span style="color:#9cdcfe">f</span><span style="color:#d4d4d4">.</span><span style="color:#dcdcaa">readline</span><span style="color:#da70d6">()</span><span style="color:#ffd700">)</span></div>
<div class="t" style="left:780.90px;top:352.24px;font-size:19.25px;font-family:'Liberation Mono',monospace;color:#6e7681">11</div>
<div class="t" style="left:843px;top:352.24px;font-size:19.25px;font-family:'Liberation Mono',monospace;"><span style="color:#c586c0">except</span><span style="color:#d4d4d4"> </span><span style="color:#4ec9b0">FileNotFoundError</span><span style="color:#d4d4d4">:</span></div>
<div class="t" style="left:780.90px;top:380.74px;font-size:19.25px;font-family:'Liberation Mono',monospace;color:#6e7681">12</div>
<div class="t" style="left:843px;top:380.74px;font-size:19.25px;font-family:'Liberation Mono',monospace;"><span style="color:#d4d4d4">    </span><span style="color:#dcdcaa">print</span><span style="color:#ffd700">(</span><span style="color:#ce9178">"No se ha encontrado el archivo"</span><span style="color:#ffd700">)</span></div>
<div class="t" style="left:780.90px;top:409.24px;font-size:19.25px;font-family:'Liberation Mono',monospace;color:#6e7681">13</div>
<div class="t" style="left:780.90px;top:437.74px;font-size:19.25px;font-family:'Liberation Mono',monospace;color:#cccccc">14</div>
<div class="r" style="left:1812.7px;top:137.2px;width:15.7px;height:1.4px;background:#6a9955;opacity:.45"></div>
<div class="r" style="left:1812.7px;top:141.2px;width:16.7px;height:1.4px;background:#6a9955;opacity:.45"></div>
<div class="r" style="left:1812.7px;top:143.2px;width:19.6px;height:1.4px;background:#6a9955;opacity:.45"></div>
<div class="r" style="left:1812.7px;top:145.2px;width:22.5px;height:1.4px;background:#6a9955;opacity:.45"></div>
<div class="r" style="left:1812.7px;top:149.2px;width:2.9px;height:1.4px;background:#c586c0;opacity:.45"></div>
<div class="r" style="left:1816.6200000000001px;top:151.2px;width:33.3px;height:1.4px;background:#c8b48a;opacity:.45"></div>
<div class="r" style="left:1820.54px;top:153.2px;width:18.6px;height:1.4px;background:#dcdcaa;opacity:.45"></div>
<div class="r" style="left:1820.54px;top:155.2px;width:18.6px;height:1.4px;background:#dcdcaa;opacity:.45"></div>
<div class="r" style="left:1812.7px;top:157.2px;width:24.5px;height:1.4px;background:#4ec9b0;opacity:.45"></div>
<div class="r" style="left:1816.6200000000001px;top:159.2px;width:38.2px;height:1.4px;background:#ce9178;opacity:.45"></div>
<div class="r" style="left:1899px;top:137px;width:21px;height:42px;background:#1b1b1b;"></div>
<div class="r" style="left:1899px;top:179px;width:21px;height:258px;background:#434343;"></div>
<div class="r" style="left:1899px;top:342px;width:21px;height:2px;background:#6a6a6a;"></div>
<div class="r" style="left:1898px;top:137px;width:1px;height:465px;background:#151515;"></div>
<div class="r" style="left:741px;top:104px;width:1179px;height:33px;background:#1f1f1f;"></div>
<div class="r" style="left:741px;top:137px;width:1157px;height:6px;background:linear-gradient(rgba(0,0,0,.55),rgba(0,0,0,0));"></div>
<div class="t" style="left: 765px; top: 112.29px; font-size: 19.5px; color: rgb(169, 169, 169); transform: scaleX(0.9975);">Aprender Python</div>
<svg class="i" style="left:919px;top:113.5px;width:10px;height:16px;" viewBox="0 0 10 16"><path d="M1 1L9 8.0L1 15" fill="none" stroke="#a9a9a9" stroke-width="1.5" stroke-linecap="round" stroke-linejoin="round"></path></svg>
<div class="t" style="left: 935.8px; top: 112.29px; font-size: 19.5px; color: rgb(169, 169, 169); transform: scaleX(0.9814);">Python curso</div>
<svg class="i" style="left:1056px;top:113.5px;width:10px;height:16px;" viewBox="0 0 10 16"><path d="M1 1L9 8.0L1 15" fill="none" stroke="#a9a9a9" stroke-width="1.5" stroke-linecap="round" stroke-linejoin="round"></path></svg>
<svg class="i" style="left:1078px;top:112.5px;width:16.3px;height:16.3px;" viewBox="0 0 16.3 16.3"><path fill="#5ea8cf" d="M3.9 2Q3.9 .3 5.6 .3H10Q11.8 .3 11.8 2V6.8Q11.8 8.2 10.3 8.2H6.3Q4.8 8.2 4.8 9.7V11.7H2Q.3 11.7 .3 10V6Q.3 4.3 2 4.3H8V3.7H3.9Z"></path><circle cx="5.9" cy="1.8" r=".75" fill="#1e3a4c"></circle><path fill="#5ea8cf" stroke="#1d3140" stroke-width=".55" d="M12.4 14.3Q12.4 16 10.7 16H6.3Q4.5 16 4.5 14.3V9.8Q4.5 8.3 6 8.3H10Q11.5 8.3 11.5 6.8V4.6H14.3Q16 4.6 16 6.3V10.3Q16 12 14.3 12H8.3V12.6H12.4Z"></path><circle cx="10.4" cy="14.5" r=".75" fill="#1e3a4c"></circle></svg>
<div class="t" style="left: 1105.5px; top: 112.29px; font-size: 19.5px; color: rgb(169, 169, 169); transform: scaleX(0.96);">manejo_archivos.py</div>
<svg class="i" style="left:1281px;top:113.5px;width:10px;height:16px;" viewBox="0 0 10 16"><path d="M1 1L9 8.0L1 15" fill="none" stroke="#a9a9a9" stroke-width="1.5" stroke-linecap="round" stroke-linejoin="round"></path></svg>
<svg class="i" style="left:1297px;top:124px;width:14px;height:4px;" viewBox="0 0 14 4"><circle cx="1.7" cy="2" r="1.5" fill="#a9a9a9"></circle><circle cx="7" cy="2" r="1.5" fill="#a9a9a9"></circle><circle cx="12.3" cy="2" r="1.5" fill="#a9a9a9"></circle></svg>
<div class="r" style="left:741px;top:52px;width:1179px;height:51px;background:#181818;"></div>
<div class="r" style="left:1255px;top:52px;width:258px;height:52px;background:#1f1f1f;"></div>
<div class="r" style="left:1255px;top:52px;width:258px;height:1.5px;background:#1565a8;"></div>
<div class="r" style="left:952px;top:52px;width:1px;height:51px;background:#2b2b2b;"></div>
<div class="r" style="left:1254px;top:52px;width:1px;height:51px;background:#2b2b2b;"></div>
<div class="r" style="left:1513px;top:52px;width:1px;height:51px;background:#2b2b2b;"></div>
<div class="r" style="left:1693px;top:52px;width:1px;height:51px;background:#2b2b2b;"></div>
<svg class="i" style="left:762px;top:71px;width:17px;height:15px;" viewBox="0 0 17 15"><path d="M1 4h16M1 11.5h16" fill="none" stroke="#9d9d9d" stroke-width="1.3" stroke-linecap="round" stroke-linejoin="round"></path><circle cx="11" cy="4" r="2.3" fill="#181818" stroke="#9d9d9d" stroke-width="1.3"></circle><circle cx="5.5" cy="11.5" r="2.3" fill="#181818" stroke="#9d9d9d" stroke-width="1.3"></circle></svg>
<div class="t" style="left: 789px; top: 69.49px; font-size: 19.5px; color: rgb(157, 157, 157); transform: scaleX(1.0056);">Configuración</div>
<svg class="i" style="left:973.7px;top:69.7px;width:16.3px;height:16.3px;" viewBox="0 0 16.3 16.3"><path fill="#5ea8cf" d="M3.9 2Q3.9 .3 5.6 .3H10Q11.8 .3 11.8 2V6.8Q11.8 8.2 10.3 8.2H6.3Q4.8 8.2 4.8 9.7V11.7H2Q.3 11.7 .3 10V6Q.3 4.3 2 4.3H8V3.7H3.9Z"></path><circle cx="5.9" cy="1.8" r=".75" fill="#1e3a4c"></circle><path fill="#5ea8cf" stroke="#1d3140" stroke-width=".55" d="M12.4 14.3Q12.4 16 10.7 16H6.3Q4.5 16 4.5 14.3V9.8Q4.5 8.3 6 8.3H10Q11.5 8.3 11.5 6.8V4.6H14.3Q16 4.6 16 6.3V10.3Q16 12 14.3 12H8.3V12.6H12.4Z"></path><circle cx="10.4" cy="14.5" r=".75" fill="#1e3a4c"></circle></svg>
<div class="t" style="left: 1001px; top: 69.49px; font-size: 19.5px; color: rgb(157, 157, 157); transform: scaleX(0.983);">Python_modulo_main.py</div>
<svg class="i" style="left:1276.5px;top:69.2px;width:16.3px;height:16.3px;" viewBox="0 0 16.3 16.3"><path fill="#5ea8cf" d="M3.9 2Q3.9 .3 5.6 .3H10Q11.8 .3 11.8 2V6.8Q11.8 8.2 10.3 8.2H6.3Q4.8 8.2 4.8 9.7V11.7H2Q.3 11.7 .3 10V6Q.3 4.3 2 4.3H8V3.7H3.9Z"></path><circle cx="5.9" cy="1.8" r=".75" fill="#1e3a4c"></circle><path fill="#5ea8cf" stroke="#1d3140" stroke-width=".55" d="M12.4 14.3Q12.4 16 10.7 16H6.3Q4.5 16 4.5 14.3V9.8Q4.5 8.3 6 8.3H10Q11.5 8.3 11.5 6.8V4.6H14.3Q16 4.6 16 6.3V10.3Q16 12 14.3 12H8.3V12.6H12.4Z"></path><circle cx="10.4" cy="14.5" r=".75" fill="#1e3a4c"></circle></svg>
<div class="t" style="left: 1303.8px; top: 69.49px; font-size: 19.5px; color: rgb(255, 255, 255); transform: scaleX(0.9629);">manejo_archivos.py</div>
<svg class="i" style="left:1484px;top:70.5px;width:16px;height:16px;" viewBox="0 0 16 16"><path d="M1.5 1.5l13 13M14.5 1.5l-13 13" fill="none" stroke="#ffffff" stroke-width="1.7" stroke-linecap="round" stroke-linejoin="round"></path></svg>
<svg class="i" style="left:1540px;top:71px;width:13px;height:14px;preserveAspectRatio:none" viewBox="0 0 14 16"><path d="M1 1.8h13M1 6h8.5M1 10h13M1 14.2h10" fill="none" stroke="#d4d4d4" stroke-width="2.3" stroke-linecap="round" stroke-linejoin="round"></path></svg>
<div class="t" style="left: 1562px; top: 69.49px; font-size: 19.5px; color: rgb(157, 157, 157); transform: scaleX(1.0014);">archivo.txt</div>
<div class="r" style="left:1666px;top:72px;width:12px;height:12px;border-radius:6px;background:#c5c5c5;"></div>
<div style="position:absolute;left:1694px;top:52px;width:72px;height:51px;overflow:hidden;">
<svg class="i" style="left:21px;top:17.2px;width:16.3px;height:16.3px;" viewBox="0 0 16.3 16.3"><path fill="#5ea8cf" d="M3.9 2Q3.9 .3 5.6 .3H10Q11.8 .3 11.8 2V6.8Q11.8 8.2 10.3 8.2H6.3Q4.8 8.2 4.8 9.7V11.7H2Q.3 11.7 .3 10V6Q.3 4.3 2 4.3H8V3.7H3.9Z"></path><circle cx="5.9" cy="1.8" r=".75" fill="#1e3a4c"></circle><path fill="#5ea8cf" stroke="#1d3140" stroke-width=".55" d="M12.4 14.3Q12.4 16 10.7 16H6.3Q4.5 16 4.5 14.3V9.8Q4.5 8.3 6 8.3H10Q11.5 8.3 11.5 6.8V4.6H14.3Q16 4.6 16 6.3V10.3Q16 12 14.3 12H8.3V12.6H12.4Z"></path><circle cx="10.4" cy="14.5" r=".75" fill="#1e3a4c"></circle></svg>
<div class="t" style="left:49px;top:17.49px;font-size:19.5px;color:#9d9d9d;font-style:italic;">Python</div>
</div>
<div class="r" style="left:1766px;top:52px;width:154px;height:51px;background:#181818;"></div>
<div class="r" style="left:741px;top:103px;width:514px;height:1px;background:#2b2b2b;"></div>
<div class="r" style="left:1513px;top:103px;width:407px;height:1px;background:#2b2b2b;"></div>
<svg class="i" style="left:1780px;top:69px;width:18px;height:19px;" viewBox="0 0 18 19"><path d="M1.5 1.5v16l15-8z" fill="none" stroke="#cccccc" stroke-width="1.8" stroke-linecap="round" stroke-linejoin="round"></path></svg>
<svg class="i" style="left:1806px;top:74.5px;width:13px;height:8px;" viewBox="0 0 13 8"><path d="M1 1L6.5 7L12 1" fill="none" stroke="#cccccc" stroke-width="1.5" stroke-linecap="round" stroke-linejoin="round"></path></svg>
<svg class="i" style="left:1835px;top:67px;width:23px;height:22px;" viewBox="0 0 23 22"><rect x="1" y="1" width="21" height="20" rx="3" fill="none" stroke="#cccccc" stroke-width="1.8"></rect><path d="M11.5 1v20" stroke="#cccccc" stroke-width="1.8"></path></svg>
<svg class="i" style="left:1877px;top:75.5px;width:17px;height:5px;" viewBox="0 0 17 5"><circle cx="2.3" cy="2.5" r="2" fill="#cccccc"></circle><circle cx="8.5" cy="2.5" r="2" fill="#cccccc"></circle><circle cx="14.7" cy="2.5" r="2" fill="#cccccc"></circle></svg>
<div class="t" style="left: 771px; top: 622.03px; font-size: 16.5px; color: rgb(157, 157, 157); transform: scaleX(0.886);">PROBLEMAS</div>
<div class="t" style="left: 898px; top: 622.03px; font-size: 16.5px; color: rgb(157, 157, 157); transform: scaleX(0.9148);">SALIDA</div>
<div class="t" style="left: 987.8px; top: 622.03px; font-size: 16.5px; color: rgb(157, 157, 157); transform: scaleX(0.9171);">CONSOLA DE DEPURACIÓN</div>
<div class="t" style="left: 1228px; top: 622.03px; font-size: 16.5px; color: rgb(231, 231, 231); transform: scaleX(0.9079);">TERMINAL</div>
<div class="t" style="left: 1340.6px; top: 622.03px; font-size: 16.5px; color: rgb(157, 157, 157); transform: scaleX(0.8374);">PUERTOS</div>
<div class="r" style="left:1224px;top:644.5px;width:84px;height:1.5px;background:#0078d4;"></div>
<svg class="i" style="left:1544px;top:618.5px;width:23px;height:22px;" viewBox="0 0 23 22"><rect x="1" y="1" width="21" height="20" rx="3" fill="none" stroke="#cccccc" stroke-width="1.8"></rect><path d="M5 6.5l4.5 4-4.5 4M10.5 16h7" fill="none" stroke="#cccccc" stroke-width="1.7" stroke-linecap="round" stroke-linejoin="round"></path></svg>
<div class="t" style="left: 1573.7px; top: 620.76px; font-size: 18px; color: rgb(204, 204, 204); transform: scaleX(0.9064);">Python</div>
<svg class="i" style="left:1640px;top:617.5px;width:22px;height:22px;" viewBox="0 0 22 22"><path d="M11 1.5v19M1.5 11h19" fill="none" stroke="#cccccc" stroke-width="1.8" stroke-linecap="round" stroke-linejoin="round"></path></svg>
<svg class="i" style="left:1669px;top:624.5px;width:13px;height:8px;" viewBox="0 0 13 8"><path d="M1 1L6.5 7L12 1" fill="none" stroke="#cccccc" stroke-width="1.5" stroke-linecap="round" stroke-linejoin="round"></path></svg>
<svg class="i" style="left:1698.5px;top:618.5px;width:23px;height:22px;" viewBox="0 0 23 22"><rect x="1" y="1" width="21" height="20" rx="3" fill="none" stroke="#cccccc" stroke-width="1.8"></rect><path d="M11.5 1v20" stroke="#cccccc" stroke-width="1.8"></path></svg>
<svg class="i" style="left:1738.5px;top:616.5px;width:22px;height:24px;" viewBox="0 0 22 24"><path d="M1.5 5h19M7.5 5V2.5h7V5M4 5l1.3 15.5a2 2 0 0 0 2 1.8h7.4a2 2 0 0 0 2-1.8L18 5M9 9v9M13 9v9" fill="none" stroke="#cccccc" stroke-width="1.8" stroke-linecap="round" stroke-linejoin="round"></path></svg>
<svg class="i" style="left:1780px;top:626.5px;width:17px;height:5px;" viewBox="0 0 17 5"><circle cx="2.3" cy="2.5" r="2" fill="#cccccc"></circle><circle cx="8.5" cy="2.5" r="2" fill="#cccccc"></circle><circle cx="14.7" cy="2.5" r="2" fill="#cccccc"></circle></svg>
<div class="r" style="left:1817px;top:617px;width:1px;height:24px;background:#555555;"></div>
<svg class="i" style="left:1836px;top:619px;width:21px;height:20px;" viewBox="0 0 21 20"><path d="M1 6V3a2 2 0 0 1 2-2h3M15 1h3a2 2 0 0 1 2 2v3M20 14v3a2 2 0 0 1-2 2h-3M6 19H3a2 2 0 0 1-2-2v-3" fill="none" stroke="#cccccc" stroke-width="1.8" stroke-linecap="round" stroke-linejoin="round"></path></svg>
<svg class="i" style="left:1878px;top:621.5px;width:15px;height:15px;" viewBox="0 0 15 15"><path d="M1 1l13 13M14 1L1 14" fill="none" stroke="#cccccc" stroke-width="1.7" stroke-linecap="round" stroke-linejoin="round"></path></svg>
<div class="t" style="left:771px;top:665.95px;font-size:18.333px;font-family:'Liberation Mono',monospace;"><span style="color:#f5f543">thon/pythoncore-3.14-64/python.exe </span><span style="color:#29b8db">"c:/Users/DIMIN/Desktop/Aprender Javascript/Aprender Python/P</span></div>
<div class="t" style="left:771px;top:691.95px;font-size:18.333px;font-family:'Liberation Mono',monospace;"><span style="color:#29b8db">ython curso/manejo_archivos.py"</span></div>
<div class="t" style="left:771px;top:717.95px;font-size:18.333px;font-family:'Liberation Mono',monospace;"><span style="color:#cccccc">No se ha encontrado el archivo</span></div>
<div class="t" style="left:771px;top:743.95px;font-size:18.333px;font-family:'Liberation Mono',monospace;"><span style="color:#f14c4c">cd : No se encuentra la ruta de acceso 'C:\Users\DIMIN\Desktop\Aprender Javascript\Aprender</span></div>
<div class="t" style="left:771px;top:769.95px;font-size:18.333px;font-family:'Liberation Mono',monospace;"><span style="color:#f14c4c">Python\manejo_archivos\' porque no existe.</span></div>
<div class="t" style="left:771px;top:795.95px;font-size:18.333px;font-family:'Liberation Mono',monospace;"><span style="color:#f14c4c">En línea: 1 Carácter: 1</span></div>
<div class="t" style="left:771px;top:821.95px;font-size:18.333px;font-family:'Liberation Mono',monospace;"><span style="color:#f14c4c">+ cd .\manejo_archivos\</span></div>
<div class="t" style="left:771px;top:847.95px;font-size:18.333px;font-family:'Liberation Mono',monospace;"><span style="color:#f14c4c">+</span></div>
<svg class="i" style="left:792px;top:851px;width:234px;height:10px;" viewBox="0 0 234 10"><path d="M1.5 5.5q2.75 -3.2 5.5 0t5.5 0q2.75 -3.2 5.5 0t5.5 0q2.75 -3.2 5.5 0t5.5 0q2.75 -3.2 5.5 0t5.5 0q2.75 -3.2 5.5 0t5.5 0q2.75 -3.2 5.5 0t5.5 0q2.75 -3.2 5.5 0t5.5 0q2.75 -3.2 5.5 0t5.5 0q2.75 -3.2 5.5 0t5.5 0q2.75 -3.2 5.5 0t5.5 0q2.75 -3.2 5.5 0t5.5 0q2.75 -3.2 5.5 0t5.5 0q2.75 -3.2 5.5 0t5.5 0q2.75 -3.2 5.5 0t5.5 0q2.75 -3.2 5.5 0t5.5 0q2.75 -3.2 5.5 0t5.5 0q2.75 -3.2 5.5 0t5.5 0q2.75 -3.2 5.5 0t5.5 0q2.75 -3.2 5.5 0t5.5 0q2.75 -3.2 5.5 0t5.5 0q2.75 -3.2 5.5 0t5.5 0" fill="none" stroke="#f14c4c" stroke-width="2.3" stroke-linecap="round" stroke-linejoin="round"></path></svg>
<div class="t" style="left:771px;top:873.95px;font-size:18.333px;font-family:'Liberation Mono',monospace;"><span style="color:#f14c4c">    + CategoryInfo          : ObjectNotFound: (C:\Users\DIMIN\...anejo_archivos\:String) [Set-</span></div>
<div class="t" style="left:771px;top:899.95px;font-size:18.333px;font-family:'Liberation Mono',monospace;"><span style="color:#f14c4c">   Location], ItemNotFoundException</span></div>
<div class="t" style="left:771px;top:925.95px;font-size:18.333px;font-family:'Liberation Mono',monospace;"><span style="color:#f14c4c">    + FullyQualifiedErrorId : PathNotFound,Microsoft.PowerShell.Commands.SetLocationCommand</span></div>
<div class="t" style="left:771px;top:977.95px;font-size:18.333px;font-family:'Liberation Mono',monospace;"><span style="color:#cccccc">PS C:\Users\DIMIN\Desktop\Aprender Javascript\Aprender Python</span><span style="color:#f14c4c">&gt;</span><span style="color:#cccccc"> </span><span style="color:#f5f543">cd</span><span style="color:#cccccc"> .\manejo.archivos\&amp; C:/Users/D</span></div>
<div class="r" style="left:1830px;top:659px;width:1px;height:338px;background:#0c0c0c;"></div>
<div class="r" style="left:1830px;top:659px;width:21px;height:1px;background:#0c0c0c;"></div>
<div class="r" style="left:1851px;top:656px;width:1px;height:341px;background:#2b2b2b;"></div>
<div class="r" style="left:1852px;top:721px;width:2px;height:33px;background:#0078d4;"></div>
<svg class="i" style="left:1875px;top:661px;width:22px;height:21px;" viewBox="0 0 23 22"><rect x="1" y="1" width="21" height="20" rx="3" fill="none" stroke="#cccccc" stroke-width="1.8"></rect><path d="M5 6.5l4.5 4-4.5 4M10.5 16h7" fill="none" stroke="#cccccc" stroke-width="1.7" stroke-linecap="round" stroke-linejoin="round"></path></svg>
<svg class="i" style="left:1875px;top:694px;width:22px;height:21px;" viewBox="0 0 23 22"><rect x="1" y="1" width="21" height="20" rx="3" fill="none" stroke="#cccccc" stroke-width="1.8"></rect><path d="M5 6.5l4.5 4-4.5 4M10.5 16h7" fill="none" stroke="#cccccc" stroke-width="1.7" stroke-linecap="round" stroke-linejoin="round"></path></svg>
<svg class="i" style="left:1875px;top:727.5px;width:22px;height:21px;" viewBox="0 0 23 22"><rect x="1" y="1" width="21" height="20" rx="3" fill="none" stroke="#cccccc" stroke-width="1.8"></rect><path d="M5 6.5l4.5 4-4.5 4M10.5 16h7" fill="none" stroke="#cccccc" stroke-width="1.7" stroke-linecap="round" stroke-linejoin="round"></path></svg>
<svg class="i" style="left:15px;top:1002px;width:18px;height:22px;" viewBox="0 0 18 22"><path d="M1.6 7.6L8.1 13.8 1.6 20.3M16.4 1.3L9.6 7.9 16.4 14" fill="none" stroke="#cccccc" stroke-width="1.6" stroke-linecap="round" stroke-linejoin="round"></path></svg>
<svg class="i" style="left:61px;top:1002px;width:23px;height:22px;" viewBox="0 0 23 22"><circle cx="11.5" cy="11" r="10" fill="none" stroke="#cccccc" stroke-width="1.7"></circle><path d="M7.5 7l8 8M15.5 7l-8 8" fill="none" stroke="#cccccc" stroke-width="1.7" stroke-linecap="round" stroke-linejoin="round"></path></svg>
<div class="t" style="left:89.5px;top:1004.26px;font-size:18px;color:#cccccc;">0</div>
<svg class="i" style="left:104px;top:1002px;width:23px;height:21px;" viewBox="0 0 23 21"><path d="M11.5 1.5L1.5 19.5h20z" fill="none" stroke="#cccccc" stroke-width="1.7" stroke-linecap="round" stroke-linejoin="round"></path><path d="M11.5 7.5v6" fill="none" stroke="#cccccc" stroke-width="1.8" stroke-linecap="round" stroke-linejoin="round"></path><circle cx="11.5" cy="16.3" r="1.1" fill="#cccccc"></circle></svg>
<div class="t" style="left:133px;top:1004.26px;font-size:18px;color:#cccccc;">0</div>
<div class="r" style="left:980px;top:998px;width:48px;height:32px;background:#333336;"></div>
<svg class="i" style="left:992px;top:1003px;width:22px;height:19px;" viewBox="0 0 22 19"><path d="M8.5 1.5a7 7 0 1 1 0 14 7 7 0 0 1 0-14zM13.5 13l6 5M8.5 5v7M5 8.5h7" fill="none" stroke="#cccccc" stroke-width="1.6" stroke-linecap="round" stroke-linejoin="round"></path></svg>
<div class="t" style="left: 1040px; top: 1004.76px; font-size: 18px; color: rgb(204, 204, 204); transform: scaleX(0.9299);">Lín. 14, col. 1</div>
<div class="t" style="left: 1166px; top: 1004.76px; font-size: 18px; color: rgb(204, 204, 204); transform: scaleX(0.9134);">Espacios: 4</div>
<div class="t" style="left: 1276px; top: 1004.76px; font-size: 18px; color: rgb(204, 204, 204); transform: scaleX(0.9118);">UTF-8</div>
<div class="t" style="left: 1347px; top: 1004.76px; font-size: 18px; color: rgb(204, 204, 204); transform: scaleX(0.8295);">CRLF</div>
<div class="t" style="left: 1411px; top: 1004.76px; font-size: 18px; color: rgb(204, 204, 204); transform: scaleX(1.233);">{ }</div>
<div class="t" style="left: 1444px; top: 1004.76px; font-size: 18px; color: rgb(204, 204, 204); transform: scaleX(0.9742);">Python</div>
<svg class="i" style="left:1516px;top:998px;width:40px;height:30px;" viewBox="0 0 40 30"><path d="M7 19.8C7 15.8 9.5 14 12 14.3h14c2.5-.3 5 1.5 5 5.5 0 4.2-4.5 6.2-12 6.2S7 24 7 19.8z" fill="#cccccc"></path><rect x="12" y="15" width="13.8" height="7" rx="1" fill="#181818"></rect><rect x="16" y="16.5" width="2" height="4.5" fill="#cccccc"></rect><rect x="20.8" y="16.5" width="2" height="4.5" fill="#cccccc"></rect><circle cx="15" cy="9.7" r="4.3" fill="#181818" stroke="#cccccc" stroke-width="2"></circle><circle cx="23.6" cy="9.7" r="4.3" fill="#181818" stroke="#cccccc" stroke-width="2"></circle></svg>
<div class="t" style="left: 1571.6px; top: 1004.76px; font-size: 18px; color: rgb(204, 204, 204); transform: scaleX(0.9151);">3.14.2</div>
<div class="t" style="left: 1642px; top: 1004.76px; font-size: 18px; color: rgb(204, 204, 204); transform: scaleX(0.9595);">Python 3.14.2</div>
<svg class="i" style="left:1773px;top:1002px;width:23px;height:22px;" viewBox="0 0 23 22"><circle cx="11.5" cy="11" r="10" fill="none" stroke="#cccccc" stroke-width="1.8"></circle><path d="M18.5 4l-14 14" fill="none" stroke="#cccccc" stroke-width="1.8" stroke-linecap="round" stroke-linejoin="round"></path></svg>
<div class="t" style="left: 1802.3px; top: 1004.76px; font-size: 18px; color: rgb(204, 204, 204); transform: scaleX(0.9943);">Prettier</div>
<svg class="i" style="left:1886px;top:1002px;width:22px;height:22px;" viewBox="0 0 22 22"><path d="M10 2.5a6 6 0 0 0-6 6v5.5L2 17.5h16l-2-3.5V8.5a6 6 0 0 0-6-6zM7.5 20h5" fill="none" stroke="#cccccc" stroke-width="1.7" stroke-linecap="round" stroke-linejoin="round"></path><circle cx="16.5" cy="4.5" r="3.5" fill="#cccccc" stroke="#181818" stroke-width="1"></circle></svg>
<div class="r" style="left:0;top:1030px;width:1920px;height:50px;background:linear-gradient(90deg,#e7e2bc 0px,#e8e1c0 60px,#ead9db 430px,#ebdcd6 540px,#eae4c4 640px,#e9e5c2 800px,#ebe4c6 1000px,#ece6c4 1200px,#e8e9ca 1330px,#ede3d4 1400px,#ece7cb 1500px,#efead6 1700px,#eeead5 1920px);"></div>
<div class="r" style="left:920px;top:1030px;width:61px;height:50px;background:#f3f0e6;"></div>
<div class="r" style="left:61px;top:1030px;width:359px;height:50px;background:#ffffff;"></div>
<div class="r" style="left:61px;top:1079px;width:359px;height:1px;background:#d0d0d0;"></div>
<svg class="i" style="left:20px;top:1045px;width:21px;height:20px;" viewBox="0 0 21 20"><path d="M0 2.8L8.6 1.6v7.8H0zM9.6 1.5L21 0v9.4H9.6zM0 10.4h8.6v7.9L0 17.2zM9.6 10.4H21V20l-11.4-1.5z" fill="#000"></path></svg>
<svg class="i" style="left:75px;top:1045px;width:20px;height:20px;" viewBox="0 0 20 20"><path d="M12.5 1a6.5 6.5 0 1 1 0 13 6.5 6.5 0 0 1 0-13zM8 12.5L1 19.5" fill="none" stroke="#222" stroke-width="1.5" stroke-linecap="round" stroke-linejoin="round"></path></svg>
<div class="t" style="left: 111.3px; top: 1046.34px; font-size: 18.5px; color: rgb(42, 42, 48); -webkit-text-stroke-width: 0px; transform: scaleX(0.9448);">Buscar</div>
<svg class="i" style="left:430px;top:1034px;width:45px;height:40px;" viewBox="0 0 45 40"><defs><linearGradient id="cp1" x1="0" y1="0" x2="0" y2="1"><stop offset="0" stop-color="#1b9de2"></stop><stop offset=".5" stop-color="#3cb56a"></stop><stop offset=".72" stop-color="#e3c21c"></stop><stop offset="1" stop-color="#f3622a"></stop></linearGradient><linearGradient id="cp2" x1="0" y1="0" x2="0" y2="1"><stop offset="0" stop-color="#b14ee8"></stop><stop offset=".6" stop-color="#ea58a0"></stop><stop offset="1" stop-color="#ff9058"></stop></linearGradient></defs><path d="M13 6.9H29.5Q31.5 6.9 31 9L24.5 12.6 19.5 31.5Q18.5 34 16 32.5L10.5 27.5Q9 26 9.3 24L11.3 8.9Q11.6 6.9 13 6.9Z" fill="url(#cp1)"></path><path d="M22 6.9H29.5Q31.5 6.9 31 9L29.2 15.5 23 14Z" fill="#2c5fe0"></path><path d="M26.5 14.3H37.5Q40 14.3 39.5 17L35.8 30Q35 32.5 32.5 32.8L21 33.8Q19 34 19.5 32L24.6 16Q25 14.3 26.5 14.3Z" fill="url(#cp2)"></path></svg>
<svg class="i" style="left:500px;top:1039.7px;width:31px;height:31px;" viewBox="0 0 31 31"><defs><linearGradient id="ed1" x1="0" y1="1" x2=".6" y2="0"><stop offset="0" stop-color="#0b58b0"></stop><stop offset="1" stop-color="#1f9ae6"></stop></linearGradient><linearGradient id="ed2" x1="0" y1="0" x2="1" y2=".6"><stop offset="0" stop-color="#2fb8ea"></stop><stop offset="1" stop-color="#5ee26a"></stop></linearGradient></defs><circle cx="15.5" cy="15.5" r="15.2" fill="url(#ed1)"></circle><path d="M2 12C4 5 9.5.5 15.5.5 24.5.5 30.8 7 30.8 14.5 30.8 19 27.5 21.8 23 21.8 19.5 21.8 16.8 20.3 16.8 17.8 16.8 15.8 18.3 14.8 18.3 12.8 18.3 9.8 15 7.8 11.2 7.8 7.2 7.8 4 9.8 2 12Z" fill="url(#ed2)"></path><ellipse cx="15.6" cy="16.4" rx="3.2" ry="4.4" fill="#ebe1d8"></ellipse><path d="M8.5 19.5C10.5 25.5 15.5 28.3 21 28 24.8 27.7 27.5 25.6 29 23.2 26.5 24.3 23.5 24.6 20.8 24 17.3 23.2 14.8 21.3 13.5 19Z" fill="#0d55a8"></path></svg>
<svg class="i" style="left:563px;top:1042px;width:30px;height:25px;" viewBox="0 0 30 25"><path d="M1 2a1.5 1.5 0 0 1 1.5-1.5h8l2 2.5h15A1.5 1.5 0 0 1 29 4.5V23a1.5 1.5 0 0 1-1.5 1.5h-25A1.5 1.5 0 0 1 1 23z" fill="#f7d66b"></path><path d="M1 5h28v2H1z" fill="#e7b23b"></path><rect x="2" y="0.5" width="11" height="3" rx="1" fill="#d99a1e"></rect><path d="M8 14h14v10.5h-4V18h-6v6.5H8z" fill="#3c86c5"></path></svg>
<div class="r" style="left:553px;top:1076.5px;width:51px;height:3.5px;background:#0a6cbf;"></div>
<svg class="i" style="left:624.5px;top:1040px;width:30px;height:30px;" viewBox="0 0 30 30"><path d="M9 6V3.5a2.5 2.5 0 0 1 2.5-2.5h7A2.5 2.5 0 0 1 21 3.5V6" fill="none" stroke="#28a8e0" stroke-width="2"></path><rect x="0.5" y="6" width="29" height="23.5" rx="3" fill="#1a4f8a"></rect><rect x="9" y="11.5" width="5.5" height="5.5" fill="#f25022"></rect><rect x="15.5" y="11.5" width="5.5" height="5.5" fill="#7fba00"></rect><rect x="9" y="18" width="5.5" height="5.5" fill="#00a4ef"></rect><rect x="15.5" y="18" width="5.5" height="5.5" fill="#ffb900"></rect></svg>
<svg class="i" style="left:686.5px;top:1040px;width:30px;height:30px;" viewBox="0 0 30 30"><path d="M12 2l14-1a3 3 0 0 1 3 3v14l-15 9H9V8z" fill="#1f8fe0"></path><path d="M29 10v15a3 3 0 0 1-3 3H10a3 3 0 0 1-3-3V13l11 8z" fill="#49b5f5"></path><path d="M16 5l13 5-11 8z" fill="#0d5eb8"></path><rect x="0.5" y="11" width="13" height="13" rx="2" fill="#0a5cb6"></rect><circle cx="7" cy="17.5" r="3.6" fill="none" stroke="#fff" stroke-width="2"></circle></svg>
<svg class="i" style="left:748.5px;top:1040px;width:31px;height:30px;" viewBox="0 0 31 30"><defs><linearGradient id="rd" x1="0" y1="0" x2="0" y2="1"><stop offset="0" stop-color="#2e8ad8"></stop><stop offset="1" stop-color="#0e4da0"></stop></linearGradient></defs><rect x="0.5" y="0.5" width="30" height="29" rx="2.5" fill="url(#rd)"></rect><rect x="5" y="5" width="21" height="13" fill="#7cc4f5" stroke="#dff1ff" stroke-width="1.4"></rect><path d="M11 21h9M9 24h13M7 27h17" stroke="#8fcaf5" stroke-width="1"></path></svg>
<svg class="i" style="left:810.5px;top:1040px;width:33px;height:32px;" viewBox="0 0 33 32"><circle cx="15" cy="15" r="14.5" fill="#db4437"></circle><path d="M15 15L2.5 22.2A14.5 14.5 0 0 0 15 29.5z" fill="#0f9d58"></path><path d="M2.5 22.2A14.5 14.5 0 0 1 2 8.2L15 15z" fill="#0f9d58"></path><path d="M15 15l12.5-7A14.5 14.5 0 0 1 24 26z" fill="#f4b400"></path><circle cx="15" cy="15" r="6.5" fill="#fff"></circle><circle cx="15" cy="15" r="5" fill="#4285f4"></circle><circle cx="24" cy="23.5" r="8" fill="#8e24aa" stroke="#ebe4c6" stroke-width="1"></circle><path d="M21 27l3-7.5 3 7.5M22 25h4" fill="none" stroke="#e8d0f0" stroke-width="1.3"></path></svg>
<div class="r" style="left:801px;top:1076.5px;width:51px;height:3.5px;background:#0a6cbf;"></div>
<svg class="i" style="left:872px;top:1040px;width:31px;height:31px;" viewBox="0 0 31 31"><circle cx="15.5" cy="15.5" r="15.5" fill="#5865f2"></circle><path d="M9 9.5c2-1 3.5-1.3 4.3-1.4l.5 1c1.2-.2 2.3-.2 3.5 0l.5-1c.8.1 2.3.4 4.3 1.4 1.6 2.6 2.3 5.4 2.1 8.6-1.6 1.2-3.2 1.9-4.7 2.3l-1-1.6c.6-.2 1.1-.5 1.6-.8-3 1.4-6.3 1.4-9.3 0 .5.3 1 .6 1.6.8l-1 1.6c-1.5-.4-3.1-1.1-4.7-2.3-.3-3.2.5-6 2.3-8.6z" fill="#fff"></path><ellipse cx="12.8" cy="15.2" rx="1.5" ry="1.7" fill="#5865f2"></ellipse><ellipse cx="18.2" cy="15.2" rx="1.5" ry="1.7" fill="#5865f2"></ellipse></svg>
<svg class="i" style="left:934.5px;top:1040px;width:31px;height:30px;" viewBox="0 0 100 100"><path fill="#0065a9" d="M96.5 10.8L75.9.9a6.2 6.2 0 0 0-7.1 1.2L29.4 38 12.2 25a4.2 4.2 0 0 0-5.3.2L1.4 30.2a4.2 4.2 0 0 0 0 6.2L16.3 50 1.4 63.6a4.2 4.2 0 0 0 0 6.2l5.5 5a4.2 4.2 0 0 0 5.3.2l17.2-13 39.4 35.9a6.2 6.2 0 0 0 7.1 1.2l20.6-9.9a6.2 6.2 0 0 0 3.5-5.6V16.4a6.2 6.2 0 0 0-3.5-5.6zM75 72.7L45.1 50 75 27.3z"></path><path fill="#007acc" d="M96.5 10.8L75.9.9a6.2 6.2 0 0 0-7.1 1.2L1.4 63.6a4.2 4.2 0 0 0 0 6.2l5.5 5a4.2 4.2 0 0 0 5.3.2L93.4 13.2a4.2 4.2 0 0 1 6.6 3.2v-.2a6.2 6.2 0 0 0-3.5-5.4z"></path><path fill="#1f9cf0" d="M75.9 99.1a6.2 6.2 0 0 1-7.1-1.2c2.3 2.3 6.2.7 6.2-2.6V4.7c0-3.3-3.9-4.9-6.2-2.6a6.2 6.2 0 0 1 7.1-1.2l20.6 9.9a6.2 6.2 0 0 1 3.5 5.6v67.2a6.2 6.2 0 0 1-3.5 5.6z"></path></svg>
<div class="r" style="left:920px;top:1076.5px;width:61px;height:3.5px;background:#0a6cbf;"></div>
<svg class="i" style="left:995.5px;top:1041px;width:28px;height:28px;" viewBox="0 0 28 28"><defs><linearGradient id="wd" x1="0" y1="0" x2="0" y2="1"><stop offset="0" stop-color="#41a5ee"></stop><stop offset=".5" stop-color="#2b7cd3"></stop><stop offset="1" stop-color="#103f91"></stop></linearGradient></defs><rect x="7" y="1" width="20" height="26" rx="2" fill="url(#wd)"></rect><rect x="1" y="9" width="13" height="13" rx="1.5" fill="#185abd"></rect><path d="M3 12l1.6 7 1.9-5.5 1.9 5.5L10 12" fill="none" stroke="#fff" stroke-width="1.4"></path></svg>
<div class="r" style="left:987px;top:1076.5px;width:41px;height:3.5px;background:#0a6cbf;"></div>
<div class="r" style="left:1028px;top:1076.5px;width:10px;height:3.5px;background:#8fb4d6;"></div>
<svg class="i" style="left:1060px;top:1040.5px;width:27px;height:26px;" viewBox="0 0 27 26"><rect x="0.5" y="0.5" width="26" height="25" rx="4" fill="#c4160c"></rect><path d="M13 5c-1.5 0-1.2 3 .5 6.5 1.5 3 3.5 5 6 5.3 2 .2 2.3-1.5.3-2-2.5-.6-7 .5-10.5 2.2-3 1.5-4.5 3.5-3.5 4.2 1 .7 3-1.3 4.8-4.5 1.8-3.3 3.5-8 2.4-10.5-.2-.6-.6-1.2 0-1.2z" fill="none" stroke="#fff" stroke-width="1.5"></path></svg>
<div class="r" style="left:1049px;top:1076.5px;width:51px;height:3.5px;background:#0a6cbf;"></div>
<svg class="i" style="left:1573px;top:1049px;width:18px;height:11px;" viewBox="0 0 18 11"><path d="M1 10L9 1.5 17 10" fill="none" stroke="#1a1a1a" stroke-width="1.5" stroke-linecap="round" stroke-linejoin="round"></path></svg>
<svg class="i" style="left:1605px;top:1045.5px;width:16px;height:19px;" viewBox="0 0 16 19"><path d="M1 6.5h9v6.5H1zM10 8.5l4.5-2.5v7.5L10 11M3 2.5a7 7 0 0 1 9 0M3 16.5a7 7 0 0 0 9 0" fill="none" stroke="#1a1a1a" stroke-width="1.4" stroke-linecap="round" stroke-linejoin="round"></path></svg>
<svg class="i" style="left:1634px;top:1048px;width:18px;height:16px;" viewBox="0 0 18 16"><path d="M1 14.5a13 13 0 0 1 13-13M4.5 14.5a9.5 9.5 0 0 1 9.5-9.5M8 14.5a6 6 0 0 1 6-6" fill="none" stroke="#888" stroke-width="1.4" stroke-linecap="round" stroke-linejoin="round"></path><circle cx="14" cy="14.2" r="1.6" fill="#1a1a1a"></circle></svg>
<svg class="i" style="left:1661px;top:1045.5px;width:22px;height:19px;" viewBox="0 0 22 19"><path d="M1.5 6.5h3.5l5-4.5v15l-5-4.5H1.5zM13.5 7a3.5 3.5 0 0 1 0 5M16 4.5a7 7 0 0 1 0 10M18.5 2a10.5 10.5 0 0 1 0 15" fill="none" stroke="#1a1a1a" stroke-width="1.4" stroke-linecap="round" stroke-linejoin="round"></path></svg>
<svg class="i" style="left:1692px;top:1049px;width:22px;height:17px;" viewBox="0 0 22 17"><rect x="1" y="1.5" width="18" height="10" fill="none" stroke="#1a1a1a" stroke-width="1.4"></rect><rect x="2.5" y="3" width="9" height="7" fill="#1a1a1a"></rect><circle cx="14" cy="10.5" r="6" fill="#1e9e3e"></circle><path d="M14 7l2 3h-1.2v3h-1.6v-3H12z" fill="#fff"></path></svg>
<div class="t" style="left: 1728px; top: 1047.96px; font-size: 16px; color: rgb(26, 26, 26); -webkit-text-stroke-width: 0px; transform: scaleX(0.6997);">ESP</div>
<div class="t" style="left: 1791.6px; top: 1035.06px; font-size: 16px; color: rgb(26, 26, 26); -webkit-text-stroke-width: 0px; transform: scaleX(0.824);">13:27</div>
<div class="t" style="left: 1771.5px; top: 1057.96px; font-size: 16px; color: rgb(26, 26, 26); -webkit-text-stroke-width: 0px; transform: scaleX(0.9103);">18-03-2026</div>
<svg class="i" style="left:1868px;top:1044px;width:22px;height:19px;" viewBox="0 0 22 19"><path d="M1 1h20v13H9l-4 4v-4H1z" fill="#1a1a1a"></path><path d="M5 5h12M5 8h12M5 11h8" stroke="#eeead5" stroke-width="1.2"></path></svg>
<div class="r" style="left:1877px;top:1054px;width:20px;height:20px;border-radius:11px;background:#d6d6d6;border:1px solid #8a8a8a;"></div>
<svg class="i" style="left:1877px;top:1054px;width:22px;height:22px;" viewBox="0 0 22 22"><path d="M8.6 8.2L11.4 6.2H12.4V16.3" fill="none" stroke="#1a1a1a" stroke-width="1.6"></path></svg>
<div class="r" style="left:1914px;top:1030px;width:1px;height:50px;background:#c9c4b0;"></div>
<svg class="i" style="left:1540px;top:930px;width:380px;height:150px;" viewBox="0 0 380 150"><rect x="52" y="52" width="82" height="82" rx="18" transform="rotate(45 93 93)" fill="none" stroke="rgba(150,180,60,.07)" stroke-width="22"></rect></svg>
<div class="t" style="left:1688px;top:975.5px;font-size:88px;font-weight:700;color:rgba(60,50,20,.05);-webkit-text-stroke-width:0;transform:scaleX(.85);">tecz1</div>
</body></html>
